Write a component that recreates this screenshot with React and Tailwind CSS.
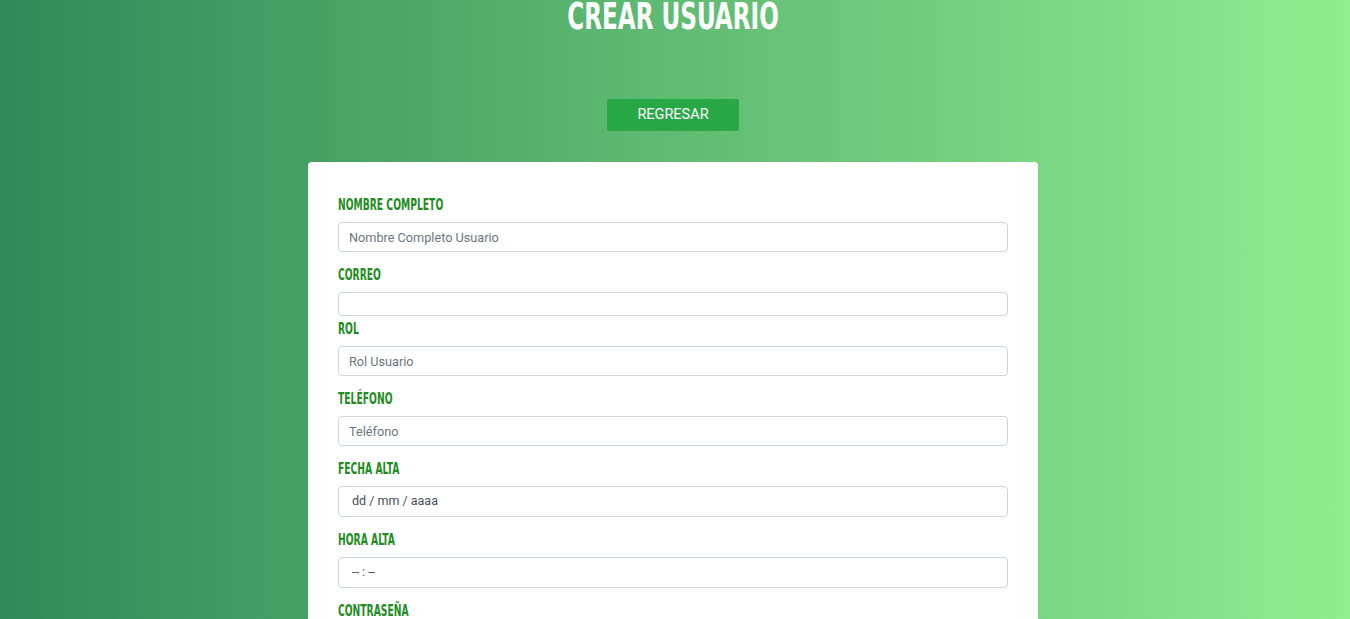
const display = { fontFamily: '"Liberation Sans Narrow", "DejaVu Sans Condensed", "Liberation Sans", sans-serif' };
const body = { fontFamily: 'Roboto, "Liberation Sans", sans-serif' };

function Label({ children }) {
  return (
    <label
      style={display}
      className="block h-[20px] leading-[20px] text-[10.25px] font-bold uppercase text-[#228b22] mb-[6px] origin-[0_13.5px] scale-y-[1.6]"
    >
      {children}
    </label>
  );
}

function Field({ label, placeholder }) {
  return (
    <div className="mb-[14px]">
      <Label>{label}</Label>
      <input
        style={body}
        placeholder={placeholder}
        className="block w-full h-[30px] border border-[#ced4da] rounded-[4px] px-[10px] text-[12.7px] text-[#495057] placeholder:text-[#6c757d] outline-none"
      />
    </div>
  );
}

function FakeInput({ label, text }) {
  return (
    <div className="mb-[14px]">
      <Label>{label}</Label>
      <div
        style={body}
        className="w-full h-[31px] border border-[#ced4da] rounded-[4px] pl-[13px] flex items-center text-[12.5px] text-[#495057]"
      >
        {text}
      </div>
    </div>
  );
}

export default function App() {
  return (
    <div className="w-full h-[619px] overflow-hidden bg-gradient-to-r from-[#2e8b57] to-[#90ee90] flex flex-col items-center pr-[4px]">
      <h1
        style={display}
        className="shrink-0 h-[40px] leading-[40px] text-[25.7px] font-bold text-white uppercase origin-[50%_29px] scale-y-[1.44]"
      >
        Crear Usuario
      </h1>

      <button
        style={body}
        className="shrink-0 mt-[59px] w-[132px] h-[32px] bg-[#28a745] text-white text-[14.5px] rounded-[2px]"
      >
        REGRESAR
      </button>

      <div className="shrink-0 mt-[31px] w-[730px] bg-white rounded-[4px] pt-[34px] px-[30px] pb-[30px]">
        <Field label="Nombre Completo" placeholder="Nombre Completo Usuario" />

        <div className="mb-[4px]">
          <Label>Correo</Label>
          <input
            type="email"
            className="block w-full h-[24px] border border-[#ced4da] rounded-[4px] outline-none"
          />
        </div>

        <Field label="Rol" placeholder="Rol Usuario" />
        <Field label="Teléfono" placeholder="Teléfono" />
        <FakeInput label="Fecha Alta" text="dd / mm / aaaa" />
        <FakeInput label="Hora Alta" text="-- : --" />
        <Field label="Contraseña" placeholder="Contraseña" />
      </div>
    </div>
  );
}
